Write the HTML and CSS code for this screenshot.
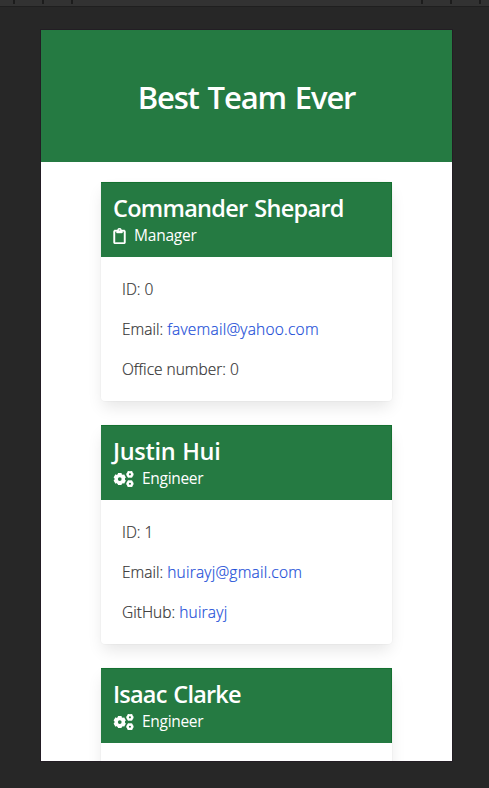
FILE: index.html
```html
<!DOCTYPE html>
<html lang="en">
<head>
<meta charset="utf-8">
<title>Best Team Ever</title>
<link rel="stylesheet" href="styles.css">
</head>
<body>
<svg width="0" height="0" class="defs" aria-hidden="true">
  <symbol id="clipboard" viewBox="0 0 384 512"><path stroke="currentColor" stroke-width="14" d="M336 64h-80c0-35.3-28.7-64-64-64s-64 28.700-64 64H48C21.500 64 0 85.500 0 112v352c0 26.500 21.500 48 48 48h288c26.500 0 48-21.500 48-48V112c0-26.500-21.500-48-48-48zM192 40c13.300 0 24 10.700 24 24s-10.700 24-24 24-24-10.700-24-24 10.700-24 24-24zm144 418c0 3.300-2.700 6-6 6H54c-3.300 0-6-2.700-6-6V118c0-3.300 2.700-6 6-6h42v36c0 6.600 5.400 12 12 12h168c6.600 0 12-5.400 12-12v-36h42c3.300 0 6 2.700 6 6z"/></symbol>
  <symbol id="cogs" viewBox="0 0 640 512">
    <g fill="none" stroke="currentColor">
      <circle cx="200" cy="256" r="116" stroke-width="112"/>
      <path stroke-width="120" d="M200 120V62M200 392v58M82 188l-50-29M318 324l50 29M82 324l-50 29M318 188l50-29"/>
      <circle cx="526" cy="106" r="68" stroke-width="68"/>
      <path stroke-width="70" d="M450 106h-38M602 106h38M487 38l-18-32M565 174l18 32M487 174l-18 32M565 38l18-32"/>
      <circle cx="526" cy="406" r="68" stroke-width="68"/>
      <path stroke-width="70" d="M450 406h-38M602 406h38M487 338l-18-32M565 474l18 32M487 474l-18 32M565 338l18-32"/>
    </g>
  </symbol>
</svg>
<div class="ruler"><i></i><i></i><i></i><i class="far"></i><i></i><i></i></div>
<main class="device">
  <header class="hero"><h1>Best Team Ever</h1></header>
  <section class="team">
    <article class="card">
      <div class="card-header">
        <h2 class="n1">Commander Shepard</h2>
        <p class="role"><svg class="icon clip"><use href="#clipboard"/></svg><span class="manager">Manager</span></p>
      </div>
      <div class="card-content">
        <p>ID: 0</p>
        <p>Email: <a>favemail@yahoo.com</a></p>
        <p>Office number: 0</p>
      </div>
    </article>
    <article class="card">
      <div class="card-header">
        <h2 class="n2">Justin Hui</h2>
        <p class="role"><svg class="icon gears"><use href="#cogs"/></svg><span class="engineer">Engineer</span></p>
      </div>
      <div class="card-content">
        <p>ID: 1</p>
        <p>Email: <a>huirayj@gmail.com</a></p>
        <p>GitHub: <a>huirayj</a></p>
      </div>
    </article>
    <article class="card">
      <div class="card-header">
        <h2 class="n3">Isaac Clarke</h2>
        <p class="role"><svg class="icon gears"><use href="#cogs"/></svg><span class="engineer">Engineer</span></p>
      </div>
      <div class="card-content"></div>
    </article>
  </section>
</main>
</body>
</html>
```

FILE: styles.css
```css
* { box-sizing: border-box; margin: 0; padding: 0; }
body {
  height: 788px;
  overflow: hidden;
  background: #272727;
  font-family: "Open Sans", "Noto Sans", sans-serif;
  font-size: 15.5px;
}
.defs { display: block; height: 0; }
.ruler {
  display: flex;
  gap: 27px;
  height: 6px;
  padding-left: 13px;
  margin-bottom: 24px;
  background: #323232;
  box-shadow: 0 1px #1f1f1f;
}
.ruler i { width: 2px; height: 4px; background: #1c1c1c; }
.ruler .far { margin-left: 321px; }
.device {
  width: 411px;
  height: 731px;
  margin-left: 41px;
  overflow: hidden;
  background: #fff;
  outline: 1px solid #231d24;
}
.hero {
  display: flex;
  align-items: center;
  justify-content: center;
  height: 132px;
  padding-top: 3px;
  background: #257a42;
  color: #fff;
}
h1 { font-size: 31px; line-height: 35px; font-weight: 600; letter-spacing: -1.15px; word-spacing: 2px; white-space: nowrap; }
.team { display: flex; flex-direction: column; gap: 24px; padding: 20px 60px; }
.card {
  height: 219px;
  border-radius: 4px;
  background: #fff;
  box-shadow: 0 8px 16px -2px rgba(10,10,10,.1), 0 0 0 1px rgba(10,10,10,.02);
}
.card-header {
  height: 75px;
  padding: 12px 12px 0;
  border: 1px solid #147030;
  border-left: 0;
  border-bottom: 0;
  background: #257a42;
  color: #fff;
}
h2 { font-size: 23.5px; line-height: 27px; font-weight: 600; white-space: nowrap; }
.n1 { letter-spacing: -.72px; word-spacing: 1.5px; }
.n2 { letter-spacing: -.3px; word-spacing: 1px; }
.n3 { letter-spacing: -.8px; word-spacing: 1.5px; }
.role { display: flex; align-items: center; height: 27px; line-height: 27px; }
.manager { letter-spacing: -.2px; }
.engineer { letter-spacing: -.3px; }
.icon { display: block; height: 16px; fill: currentColor; overflow: visible; }
.clip { width: 13px; margin-right: 8px; }
.gears { width: 21px; margin-right: 8px; }
.card-content {
  display: flex;
  flex-direction: column;
  gap: 16px;
  padding: 20px 21px;
  color: #333;
  font-weight: 300;
  line-height: 24px;
  white-space: pre;
  -webkit-text-stroke: .2px currentColor;
}
a { color: #1c4ed8; letter-spacing: .22px; }
```
